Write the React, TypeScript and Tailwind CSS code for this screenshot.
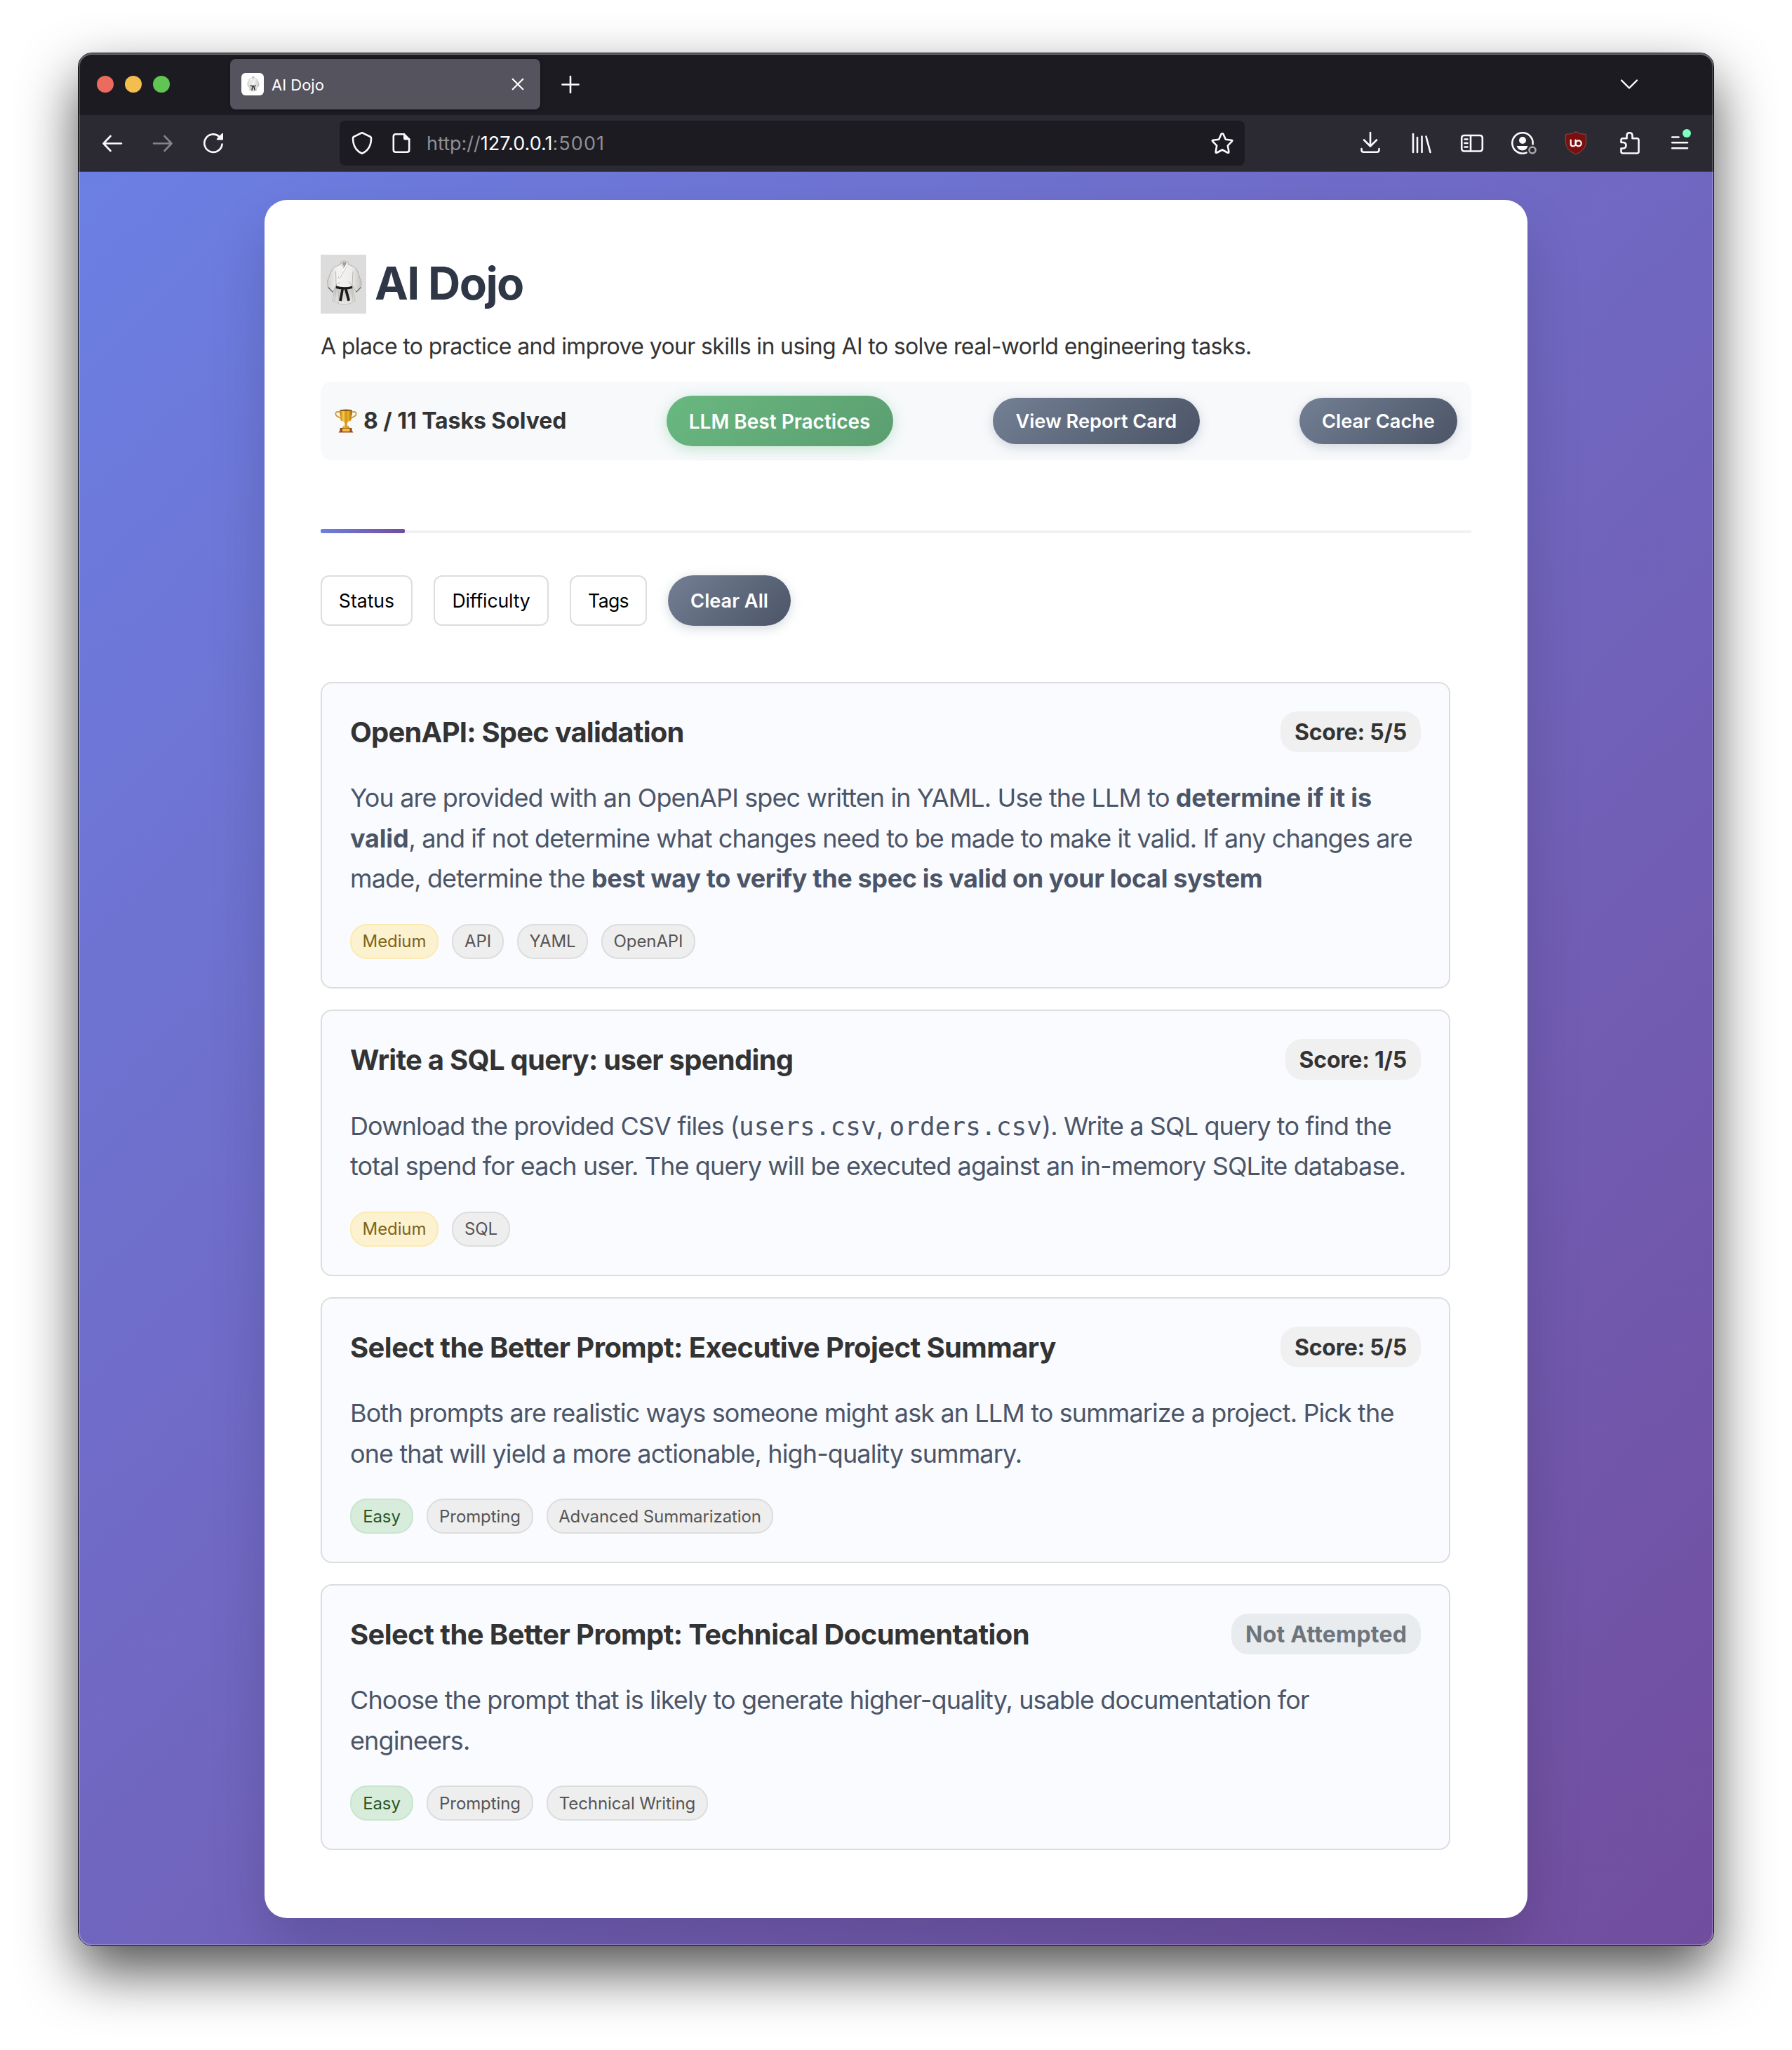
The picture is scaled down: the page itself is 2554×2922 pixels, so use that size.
import type { ReactNode } from "react";

function Icon({ size = 40, className = "", children }: { size?: number; className?: string; children: ReactNode }) {
  const half = size / 2;
  return (
    <svg
      width={size}
      height={size}
      viewBox={`${-half} ${-half} ${size} ${size}`}
      fill="none"
      stroke="currentColor"
      strokeWidth={2.6}
      strokeLinecap="round"
      strokeLinejoin="round"
      className={`shrink-0 ${className}`}
    >
      {children}
    </svg>
  );
}

function Gi({ className = "", backdrop = false }: { className?: string; backdrop?: boolean }) {
  return (
    <svg viewBox="0 0 65 84" className={`shrink-0 ${className}`}>
      <defs>
        <linearGradient id="cloth" x1="0" x2="1" y1="0" y2="0">
          <stop offset="0" stopColor="#d2d1cf" />
          <stop offset="0.3" stopColor="#f4f3f2" />
          <stop offset="0.7" stopColor="#eeedeb" />
          <stop offset="1" stopColor="#c6c5c3" />
        </linearGradient>
        <linearGradient id="skirt" x1="0" x2="0" y1="0" y2="1">
          <stop offset="0" stopColor="#c9c7c4" />
          <stop offset="1" stopColor="#eae8e5" />
        </linearGradient>
      </defs>
      {backdrop && <rect width="65" height="84" fill="#dcdcdc" />}
      <path d="M21 47 L45 47 L49.500 65.500 Q45 67 43 69 Q33 73 24 69 Q21 66.500 16.500 65.500 Z" fill="url(#skirt)" stroke="#b3b1ae" strokeWidth="0.700" />
      <path d="M22 50 L20 66 M44.500 50 L46 66 M26 50 L25 69" fill="none" stroke="#b5b2ae" strokeWidth="0.700" />
      <path d="M29 10 Q33.500 7.500 38.500 10 L39.500 14 L48 17.500 Q51.500 19.500 53.500 26 L58 39 L57.500 46 L50.500 53.500 L44.500 42 L45 47 L22 47 L22.500 42 L17.500 53.500 L10.500 46 L9.500 38 L14 26 Q16.500 19.500 20 17.500 L28.500 14 Z" fill="url(#cloth)" stroke="#9c9b99" strokeWidth="0.700" strokeLinejoin="round" />
      <path d="M30.500 11 Q33.500 9.500 37 11 L34 19 Z" fill="#a19d98" />
      <path d="M29.500 12 L33.500 20 L25 33 M39 13 L27 34 M21.500 24 L22 42 M46 24 L45 42 M24 42 L28 39 M43 42 L40 38" fill="none" stroke="#aaa8a5" strokeWidth="0.800" />
      <path d="M38 13 L26.500 32" fill="none" stroke="#ffffff" strokeWidth="1.600" />
      <path d="M10.500 46.500 L17.500 53.500 M57.500 46.500 L50.500 53.500" stroke="#5f5e5c" strokeWidth="1.100" fill="none" />
      <path d="M22 44.500 Q33 48 45 44.800 L45.300 48 Q33 51 21.600 48 Z" fill="#1d1d1d" />
      <path d="M29.500 48.500 L33 48.500 L30 66.500 L26 65.500 Z M33.500 48 L37.500 48 L42 65 L38.500 66.500 Z" fill="#1d1d1d" />
    </svg>
  );
}

function Trophy() {
  return (
    <svg width="32" height="34" viewBox="0 0 32 34" className="shrink-0">
      <defs>
        <linearGradient id="gold" x1="0" x2="1" y1="0" y2="0">
          <stop offset="0" stopColor="#b27410" />
          <stop offset="0.3" stopColor="#f6cb45" />
          <stop offset="0.5" stopColor="#d3921a" />
          <stop offset="0.7" stopColor="#e6b12f" />
          <stop offset="1" stopColor="#965a08" />
        </linearGradient>
      </defs>
      <path d="M8 4.500 Q1.300 2.500 1.300 7 Q1.800 10 6 11.500 Q9.500 13 10 17 M24 4.500 Q30.700 2.500 30.700 7 Q30.200 10 26 11.500 Q22.500 13 22 17" fill="none" stroke="#cf9625" strokeWidth="1.700" />
      <path d="M7 1.500 H25 Q25 15 18 19.500 L17.300 25 H14.700 L14 19.500 Q7 15 7 1.500 Z" fill="url(#gold)" />
      <ellipse cx="16" cy="1.800" rx="9" ry="1.200" fill="#8c5510" />
      <path d="M13 23.500 H19 L21.500 27.500 H10.500 Z" fill="url(#gold)" />
      <path d="M7.500 27 H24.500 V30.500 L26.500 33.500 H5.500 L7.500 30.500 Z" fill="#9c4a18" />
      <rect x="11" y="27.800" width="10.500" height="4.200" fill="#f0c043" />
    </svg>
  );
}

function TabStrip() {
  return (
    <div className="flex h-[88px] items-center bg-[#1c1b22] pl-[26px] text-white">
      <div className="flex gap-4">
        <span className="size-6 rounded-full bg-[#ec6a5e]" />
        <span className="size-6 rounded-full bg-[#f4be4f]" />
        <span className="size-6 rounded-full bg-[#61c554]" />
      </div>
      <div className="ml-[86px] flex h-[72px] w-[442px] items-center rounded-lg bg-[#55535d] pl-4 shadow-[0_0_4px_rgba(0,0,0,0.5)]">
        <span className="flex size-8 items-center justify-center rounded-md bg-white">
          <Gi className="h-[29px] w-[23px]" />
        </span>
        <span className="ml-[11px] pt-0.5 text-[22px]">AI Dojo</span>
        <Icon size={24} className="mr-5 ml-auto">
          <path d="M-7.300 -7.300 L7.300 7.300 M7.300 -7.300 L-7.300 7.300" strokeWidth="2.200" />
        </Icon>
      </div>
      <Icon size={28} className="ml-[29px]">
        <path d="M0 -11 V12 M-11.500 0.500 H11.500" />
      </Icon>
      <Icon size={28} className="mr-[106px] ml-auto">
        <path d="M-11 -5.500 L0 5.500 L11 -5.500" strokeWidth="2.400" />
      </Icon>
    </div>
  );
}

function AddressBar() {
  return (
    <div className="ml-[160px] flex h-16 w-[1290px] items-center rounded-lg bg-[#1c1b22] pl-3">
      <Icon>
        <path d="M0 -14.800 L12 -9 Q13 -8.500 13 -7 Q13 9 0 14.800 Q-13 9 -13 -7 Q-13 -8.500 -12 -9 Z" />
      </Icon>
      <Icon className="ml-4">
        <path d="M4 -12.800 H-8 Q-11.200 -12.800 -11.200 -9.500 V9.500 Q-11.200 12.800 -8 12.800 H8 Q11.200 12.800 11.200 9.500 V-5.500" />
        <path d="M3 -14 H4.500 L12.500 -6 V-4.500 H5.500 Q3 -4.500 3 -7 Z" fill="currentColor" stroke="none" />
      </Icon>
      <span className="ml-4 pt-0.5 text-[27px] whitespace-nowrap text-[#8f8f94]">
        <span>http://</span>
        <span className="text-[#fbfbfe]">127.0.0.1</span>
        <span className="tracking-[0.04em]">:5001</span>
      </span>
      <Icon className="mr-3 ml-auto">
        <path d="M0 -13.800 Q1 -13.800 1.500 -12.800 L4.800 -5.300 L13 -4.300 Q15.200 -4 13.600 -2.300 L7.800 3.600 L9.300 12 Q9.500 14.500 7.400 13.500 L0 9.500 L-7.400 13.500 Q-9.500 14.500 -9.300 12 L-7.800 3.600 L-13.600 -2.300 Q-15.200 -4 -13 -4.300 L-4.800 -5.300 L-1.500 -12.800 Q-1 -13.800 0 -13.800 Z" />
      </Icon>
    </div>
  );
}

function Toolbar() {
  return (
    <div className="flex h-[81px] items-center border-b border-[#3f3d42] bg-[#2b2a33] pl-7 text-[#fbfbfe]">
      <Icon>
        <path d="M-12.500 0.500 H13 M-2.500 -10 L-12.500 0.500 L-2.500 11" />
      </Icon>
      <Icon className="ml-8 text-[#85848a]">
        <path d="M12.500 0.500 H-13 M2.500 -10 L12.500 0.500 L2.500 11" />
      </Icon>
      <Icon className="ml-8">
        <path d="M12.600 1.500 A12.700 12.700 0 1 1 8.500 -9.300" />
        <path d="M14 -14 V-4.500 H5.500 Q4 -5 5 -6.200 L12.500 -14 Z" fill="currentColor" stroke="none" />
      </Icon>
      <AddressBar />
      <Icon className="ml-[159px]">
        <path d="M0 -15 V4 M-9 -4.500 L0 4.500 L9 -4.500 M-12.500 8 V9.500 Q-12.500 12.800 -9.500 12.800 H9.500 Q12.500 12.800 12.500 9.500 V8" />
      </Icon>
      <Icon className="ml-[33px]">
        <path d="M-12 -13 V13 M-6 -8 V13 M0.500 -9.500 V13 M6.500 -9.500 L12.500 13" />
      </Icon>
      <Icon className="ml-8">
        <rect x="-14.800" y="-11" width="29.600" height="22.500" rx="3.500" />
        <path d="M-2 -11 V11.500 M-10.500 -5.500 H-6.500 M-10.500 0 H-6.500 M-10.500 5.500 H-6.500" />
      </Icon>
      <Icon className="ml-8">
        <path d="M5.500 13.600 A14.700 14.700 0 1 1 14.600 1.500" />
        <circle cx="0" cy="-4" r="5" fill="currentColor" stroke="none" />
        <path d="M-8.500 4 H7.500 Q5.500 10.500 0 10.500 Q-6 10.500 -8.500 4 Z" fill="currentColor" stroke="none" />
        <circle cx="14" cy="10" r="4.500" stroke="#a9a9ad" />
      </Icon>
      <Icon className="ml-[36px]">
        <path d="M0 -16 Q6 -12.500 14.500 -12.500 V-2 Q14.500 10 0 16 Q-14.500 10 -14.500 -2 V-12.500 Q-6 -12.500 0 -16 Z" fill="#7a0f0d" stroke="#8d5a5c" strokeWidth="0.800" />
        <path d="M-7.300 -4.500 V1.500 Q-7.300 4.300 -4 4.300 Q-0.500 4.300 -0.500 1 V-4.500" strokeWidth="2.200" />
        <circle cx="3.700" cy="0.300" r="4" strokeWidth="2.200" />
      </Icon>
      <Icon className="ml-[37px]">
        <path d="M-12.500 -1 V-4.500 Q-12.500 -6.800 -10 -6.800 H-4.500 V-10.500 Q-4.300 -14.700 -0.500 -14.700 Q3.300 -14.700 3.500 -10.500 V-6.800 H10 Q12.500 -6.800 12.500 -4.500 V12 Q12.500 14.500 10 14.500 H-10 Q-12.500 14.500 -12.500 12 V7.500 H-9.500 Q-5.500 7 -5.500 3.200 Q-5.500 -0.500 -9.500 -1 Z" />
      </Icon>
      <Icon className="ml-[31px]">
        <path d="M-10.800 -8.500 H-1.500 M-10.800 -0.800 H11 M-10.800 7.300 H11" />
        <circle cx="10" cy="-14" r="6" fill="#7fffc1" stroke="none" />
      </Icon>
    </div>
  );
}

const tagStyles = {
  medium: "border-[#fceab2] bg-[#fdf2d0] text-[#7e6519]",
  easy: "border-[#c8e5cd] bg-[#d8ecdb] text-[#29562b]",
  plain: "border-[#dddddd] bg-[#eeeeee] text-[#555555]",
};

type Tag = { label: string; kind: keyof typeof tagStyles; width: string };
type Task = { title: string; titleTracking: string; score: string; attempted: boolean; lines: ReactNode[]; tags: Tag[] };

const B = ({ children, className = "tracking-[-0.005em]" }: { children: ReactNode; className?: string }) => (
  <strong className={`font-bold ${className}`}>{children}</strong>
);
const Code = ({ children }: { children: ReactNode }) => (
  <code className="font-['DejaVu_Sans_Mono',monospace] text-[36px] leading-none tracking-[0.002em]">{children}</code>
);

const tasks: Task[] = [
  {
    title: "OpenAPI: Spec validation",
    titleTracking: "tracking-[-0.020em]",
    score: "Score: 5/5",
    attempted: true,
    lines: [
      <>You are provided with an OpenAPI spec written in YAML. Use the LLM to <B>determine if it is</B></>,
      <><B>valid</B>, and if not determine what changes need to be made to make it valid. If any changes are</>,
      <>made, determine the <B className="tracking-[-0.0098em]">best way to verify the spec is valid on your local system</B></>,
    ],
    tags: [
      { label: "Medium", kind: "medium", width: "w-[126px]" },
      { label: "API", kind: "plain", width: "w-[74px]" },
      { label: "YAML", kind: "plain", width: "w-[101px]" },
      { label: "OpenAPI", kind: "plain", width: "w-[134px]" },
    ],
  },
  {
    title: "Write a SQL query: user spending",
    titleTracking: "tracking-[-0.018em]",
    score: "Score: 1/5",
    attempted: true,
    lines: [
      <span className="block leading-[58.6px]">Download the provided CSV files (<Code>users.csv</Code>, <Code>orders.csv</Code>). Write a SQL query to find the</span>,
      <>total spend for each user. The query will be executed against an in-memory SQLite database.</>,
    ],
    tags: [
      { label: "Medium", kind: "medium", width: "w-[126px]" },
      { label: "SQL", kind: "plain", width: "w-[83px]" },
    ],
  },
  {
    title: "Select the Better Prompt: Executive Project Summary",
    titleTracking: "tracking-[-0.0144em]",
    score: "Score: 5/5",
    attempted: true,
    lines: [
      <>Both prompts are realistic ways someone might ask an LLM to summarize a project. Pick the</>,
      <>one that will yield a more actionable, high-quality summary.</>,
    ],
    tags: [
      { label: "Easy", kind: "easy", width: "w-[90px]" },
      { label: "Prompting", kind: "plain", width: "w-[152px]" },
      { label: "Advanced Summarization", kind: "plain", width: "w-[323px]" },
    ],
  },
  {
    title: "Select the Better Prompt: Technical Documentation",
    titleTracking: "tracking-[-0.0147em]",
    score: "Not Attempted",
    attempted: false,
    lines: [
      <>Choose the prompt that is likely to generate higher-quality, usable documentation for</>,
      <>engineers.</>,
    ],
    tags: [
      { label: "Easy", kind: "easy", width: "w-[90px]" },
      { label: "Prompting", kind: "plain", width: "w-[152px]" },
      { label: "Technical Writing", kind: "plain", width: "w-[230px]" },
    ],
  },
];

function TaskCard({ task }: { task: Task }) {
  return (
    <article className="w-[1610px] rounded-2xl border-2 border-[#dddddd] bg-[#f9fbff] p-10">
      <div className="flex h-[58px] items-center justify-between">
        <h3 className={`pt-0.5 text-[40px] font-bold whitespace-nowrap text-[#333333] ${task.titleTracking}`}>{task.title}</h3>
        {task.attempted ? (
          <span className="flex h-[58px] items-center rounded-3xl bg-[#f0f0f0] px-5 pt-0.5 text-[32px] font-bold tracking-[-0.007em] text-[#333333]">{task.score}</span>
        ) : (
          <span className="flex h-[58px] items-center rounded-3xl bg-[#e9ecef] px-5 pt-0.5 text-[32px] font-bold tracking-[0.006em] text-[#6e757c]">{task.score}</span>
        )}
      </div>
      <p className="mt-[37px] text-[36px] leading-[57.6px] tracking-[-0.0246em] whitespace-nowrap text-[#4c5567]">
        {task.lines.map((line, i) => (
          <span key={i} className="block">{line}</span>
        ))}
      </p>
      <div className="mt-[35px] flex gap-[19px]">
        {task.tags.map((tag) => (
          <span key={tag.label} className={`flex h-[50px] items-center justify-center rounded-3xl border-2 pt-px text-[24px] tracking-[-0.004em] whitespace-nowrap ${tag.width} ${tagStyles[tag.kind]}`}>
            {tag.label}
          </span>
        ))}
      </div>
    </article>
  );
}

const slateButton =
  "flex items-center justify-center bg-linear-135 from-[#737f94] to-[#4c5567] pt-0.5 text-[27.2px] font-semibold text-white shadow-[0_4px_16px_rgba(113,128,150,0.3)]";

function DojoPage() {
  return (
    <div className="flex-1 overflow-hidden bg-linear-135 from-[#6b7fe3] to-[#714d9e] px-[265px] pt-10">
      <main className="h-[2449px] rounded-[32px] bg-white px-20 pt-[78px] shadow-[0_40px_80px_rgba(0,0,0,0.15)]">
        <header className="flex h-[84px] items-center">
          <Gi backdrop className="h-[84px] w-[65px]" />
          <h1 className="ml-3 pb-0.5 text-[64px] font-bold tracking-[-0.025em] text-[#2f3747]">AI Dojo</h1>
        </header>
        <p className="mt-[21px] text-[32px] leading-[51px] tracking-[-0.0195em] whitespace-nowrap text-[#333333]">
          A place to practice and improve your skills in using AI to solve real-world engineering tasks.
        </p>
        <section className="mt-[25px] flex h-28 items-center justify-between rounded-2xl bg-[#f8f9fb] px-5">
          <div className="flex items-center gap-[9px] text-[32px] font-bold whitespace-nowrap text-[#333333]">
            <Trophy />
            <span className="tracking-[-0.002em]">8 / 11 Tasks Solved</span>
          </div>
          <button className="flex h-[72px] w-[323px] items-center justify-center rounded-full bg-linear-135 from-[#69b880] to-[#5b9e70] pt-0.5 text-[28px] font-semibold whitespace-nowrap text-white shadow-[0_4px_20px_rgba(72,187,120,0.3)]">
            LLM Best Practices
          </button>
          <button className={`h-[66px] w-[295px] rounded-full ${slateButton}`}>View Report Card</button>
          <button className={`h-[66px] w-[225px] rounded-full ${slateButton}`}>Clear Cache</button>
        </section>
        <div className="mt-[98px] flex h-1.5 items-end">
          <div className="h-1.5 w-[120px] rounded-xs bg-linear-90 from-[#6b7fe3] to-[#714d9e]" />
          <div className="h-1 flex-1 bg-[#f0f1f4]" />
        </div>
        <nav className="mt-[60px] flex h-[72px] gap-[30px] text-[26.6px] text-black">
          <button className="w-[131px] rounded-xl border-2 border-[#dddddd] pt-0.5">Status</button>
          <button className="w-[164px] rounded-xl border-2 border-[#dddddd] pt-0.5 tracking-[-0.006em]">Difficulty</button>
          <button className="w-[110px] rounded-xl border-2 border-[#dddddd] pt-0.5 tracking-[-0.025em]">Tags</button>
          <button className={`w-[175px] rounded-full ${slateButton}`}>Clear All</button>
        </nav>
        <section className="mt-20 flex flex-col gap-[30px]">
          {tasks.map((task) => (
            <TaskCard key={task.title} task={task} />
          ))}
        </section>
      </main>
    </div>
  );
}

export default function App() {
  return (
    <div className="h-[2922px] w-[2554px] overflow-hidden bg-white pt-[75px] pl-[111px] font-['Inter',sans-serif]">
      <div className="relative flex h-[2699px] w-[2332px] flex-col overflow-hidden rounded-[20px] border border-black shadow-[0_36px_80px_rgba(0,0,0,0.68)]">
        <TabStrip />
        <Toolbar />
        <DojoPage />
        <div className="pointer-events-none absolute inset-0 rounded-[19px] shadow-[inset_0_0_0_2px_rgba(255,255,255,0.2),inset_0_2px_0_rgba(255,255,255,0.2)]" />
      </div>
    </div>
  );
}
